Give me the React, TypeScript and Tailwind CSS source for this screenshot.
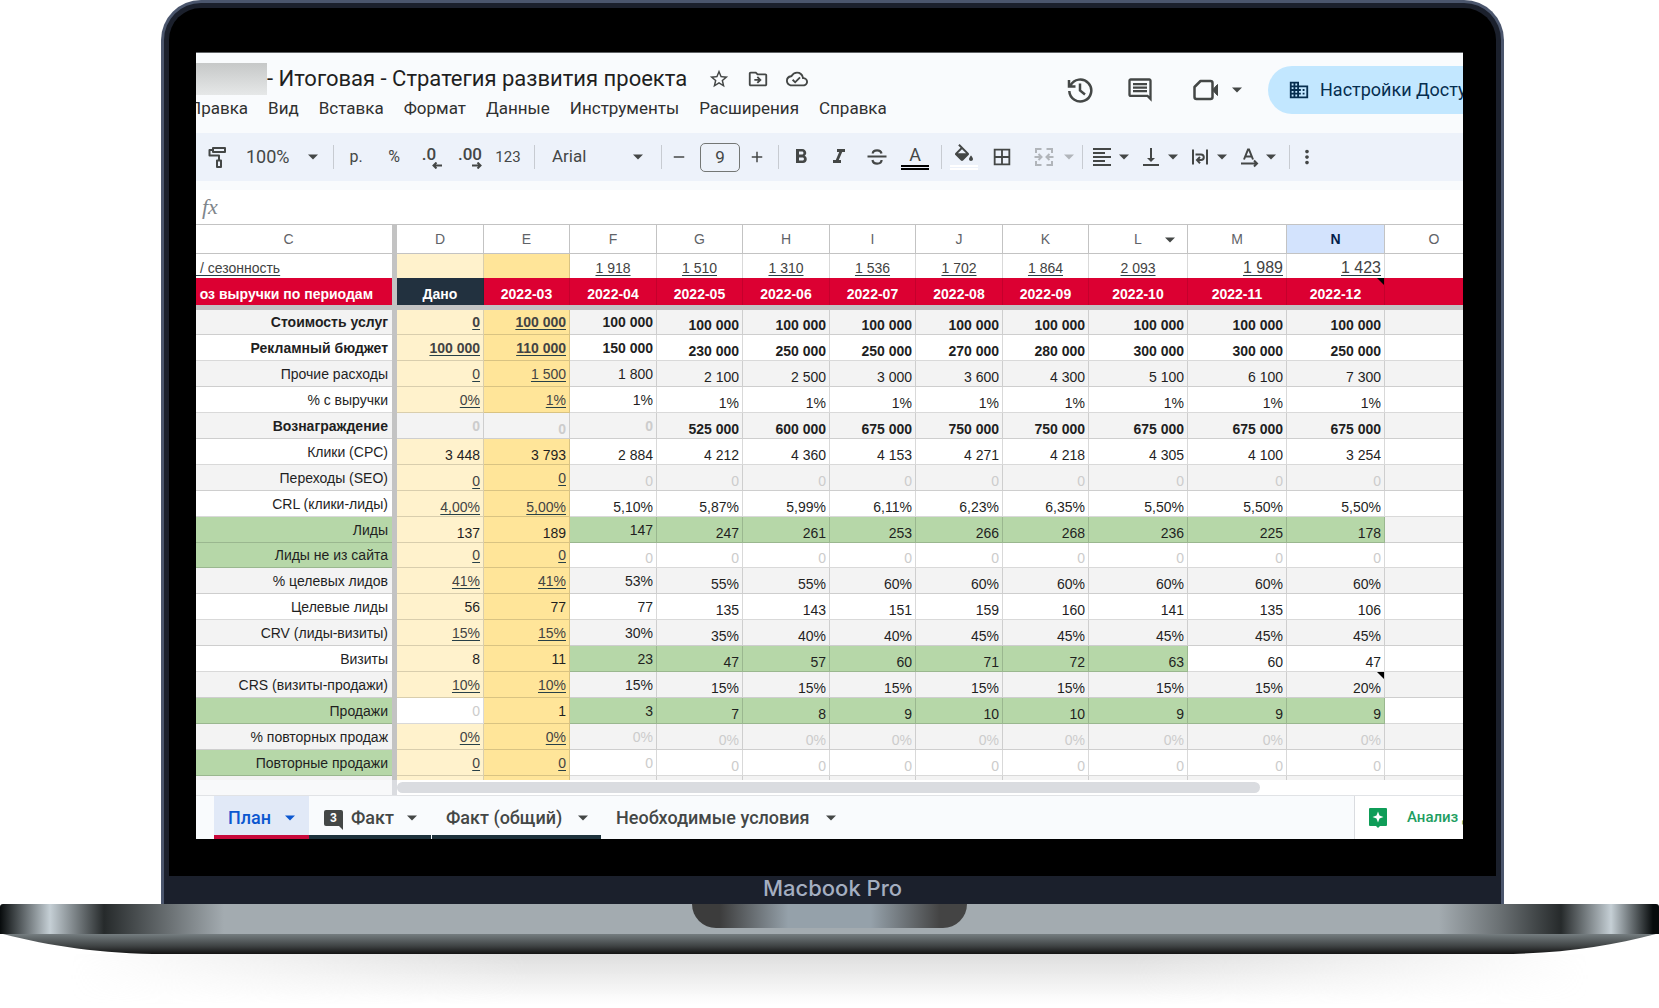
import type { ReactNode } from "react";
import clsx from "clsx";
import {
  MdAdd,
  MdBorderAll,
  MdDomain,
  MdFormatAlignLeft,
  MdFormatBold,
  MdFormatItalic,
  MdMoreVert,
  MdOutlineCloudDone,
  MdOutlineDriveFileMove,
  MdOutlineInsertComment,
  MdRemove,
  MdStarBorder,
  MdVerticalAlignBottom,
} from "react-icons/md";

const menu = ["Правка", "Вид", "Вставка", "Формат", "Данные", "Инструменты", "Расширения", "Справка"];

const columns = [
  { name: "D", width: "w-[87px]" },
  { name: "E", width: "w-[86px]" },
  { name: "F", width: "w-[87px]" },
  { name: "G", width: "w-[86px]" },
  { name: "H", width: "w-[87px]" },
  { name: "I", width: "w-[86px]" },
  { name: "J", width: "w-[87px]" },
  { name: "K", width: "w-[86px]" },
  { name: "L", width: "w-[99px]" },
  { name: "M", width: "w-[99px]" },
  { name: "N", width: "w-[98px]" },
  { name: "O", width: "w-[99px]" },
];

const season = ["", "", "1 918", "1 510", "1 310", "1 536", "1 702", "1 864", "2 093", "1 989", "1 423", ""];

const periods = [
  "Дано",
  "2022-03",
  "2022-04",
  "2022-05",
  "2022-06",
  "2022-07",
  "2022-08",
  "2022-09",
  "2022-10",
  "2022-11",
  "2022-12",
  "",
];

type Row = {
  label: string;
  values: string[];
  bold?: boolean;
  links?: boolean;
  greenLabel?: boolean;
  // last column of the green band that starts at F
  greenTo?: string;
  // columns among D, E and F whose text sits on the bottom edge
  low?: string;
  // columns among D and E without the yellow fill
  plain?: string;
  note?: string;
};

const zeros = (v: string, n: number) => new Array(n).fill(v);

const rows: Row[] = [
  { label: "Стоимость услуг", bold: true, links: true, values: ["0", ...zeros("100 000", 10)] },
  {
    label: "Рекламный бюджет",
    bold: true,
    links: true,
    values: ["100 000", "110 000", "150 000", "230 000", "250 000", "250 000", "270 000", "280 000", "300 000", "300 000", "250 000"],
  },
  {
    label: "Прочие расходы",
    links: true,
    values: ["0", "1 500", "1 800", "2 100", "2 500", "3 000", "3 600", "4 300", "5 100", "6 100", "7 300"],
  },
  { label: "% с выручки", links: true, values: ["0%", ...zeros("1%", 10)] },
  {
    label: "Вознаграждение",
    bold: true,
    low: "E",
    plain: "DE",
    values: ["0", "0", "0", "525 000", "600 000", "675 000", "750 000", "750 000", "675 000", "675 000", "675 000"],
  },
  {
    label: "Клики (CPC)",
    low: "DEF",
    values: ["3 448", "3 793", "2 884", "4 212", "4 360", "4 153", "4 271", "4 218", "4 305", "4 100", "3 254"],
  },
  { label: "Переходы (SEO)", links: true, low: "DF", values: zeros("0", 11) },
  {
    label: "CRL (клики-лиды)",
    links: true,
    low: "DEF",
    values: ["4,00%", "5,00%", "5,10%", "5,87%", "5,99%", "6,11%", "6,23%", "6,35%", "5,50%", "5,50%", "5,50%"],
  },
  {
    label: "Лиды",
    greenLabel: true,
    greenTo: "N",
    low: "DE",
    values: ["137", "189", "147", "247", "261", "253", "266", "268", "236", "225", "178"],
  },
  { label: "Лиды не из сайта", greenLabel: true, links: true, low: "F", values: zeros("0", 11) },
  {
    label: "% целевых лидов",
    links: true,
    values: ["41%", "41%", "53%", "55%", "55%", "60%", "60%", "60%", "60%", "60%", "60%"],
  },
  { label: "Целевые лиды", values: ["56", "77", "77", "135", "143", "151", "159", "160", "141", "135", "106"] },
  {
    label: "CRV (лиды-визиты)",
    links: true,
    values: ["15%", "15%", "30%", "35%", "40%", "40%", "45%", "45%", "45%", "45%", "45%"],
  },
  { label: "Визиты", greenTo: "L", values: ["8", "11", "23", "47", "57", "60", "71", "72", "63", "60", "47"] },
  { label: "CRS (визиты-продажи)", links: true, note: "N", values: ["10%", "10%", ...zeros("15%", 8), "20%"] },
  {
    label: "Продажи",
    greenLabel: true,
    greenTo: "N",
    plain: "D",
    values: ["0", "1", "3", "7", "8", "9", "10", "10", "9", "9", "9"],
  },
  { label: "% повторных продаж", links: true, values: zeros("0%", 11) },
  { label: "Повторные продажи", greenLabel: true, links: true, values: zeros("0", 11) },
];

const Caret = ({ className }: { className?: string }) => (
  <svg viewBox="0 0 10 6" className={clsx("w-[10px] h-[6px] shrink-0", className)} fill="currentColor">
    <path d="M0 0.5h10L5 5.5z" />
  </svg>
);

const Divider = () => <span className="w-px h-6 ml-[7px] mr-[3px] shrink-0 bg-[#c7cbd1]" />;

const Tool = ({ label, wide, children }: { label: string; wide?: string; children: ReactNode }) => (
  <button aria-label={label} className={clsx("h-8 shrink-0 flex items-center justify-center", wide ?? "w-[38px]")}>
    {children}
  </button>
);

const DropTool = ({ label, children }: { label: string; children: ReactNode }) => (
  <button aria-label={label} className="w-[49px] h-8 pl-1 shrink-0 flex items-center gap-[5px]">
    {children}
    <Caret />
  </button>
);

const PaintIcon = () => (
  <svg viewBox="0 0 20 24" className="w-5 h-6" fill="none" stroke="currentColor" strokeWidth="2">
    <path d="M6 3h12v4H6zM6 5H2.500v5.500H12V15M10 15.500h4V22h-4z" strokeLinejoin="round" />
  </svg>
);

const ArrowUnder = ({ flip }: { flip?: boolean }) => (
  <svg viewBox="0 0 10 7" className={clsx("w-[10px] h-[7px]", flip && "rotate-180")} fill="none" stroke="currentColor" strokeWidth="2">
    <path d="M10 3.500H1.500M4.500 0.500l-3 3 3 3" />
  </svg>
);

const StrikeIcon = () => (
  <svg viewBox="0 0 20 20" className="size-5" fill="none" stroke="currentColor" strokeWidth="2.200">
    <path d="M0.500 9.500h19M14.500 6.500c-.4-2-2-3.200-4.400-3.200-2.600 0-4.200 1.300-4.400 3.200M5.500 13c.3 2.200 2 3.600 4.600 3.600 2.700 0 4.400-1.300 4.500-3.600" />
  </svg>
);

const FillIcon = () => (
  <svg viewBox="0 0 24 18" className="w-6 h-[18px]" fill="currentColor">
    <path d="M16.560 8.940L7.620 0 6.210 1.410l2.380 2.380-5.150 5.150c-.59.59-.59 1.540 0 2.120l5.500 5.500c.29.29.68.44 1.060.44s.77-.15 1.060-.44l5.500-5.500c.59-.58.59-1.530 0-2.120zM5.900 9.300L10 5.210 14.100 9.300H5.900zM19 11.500s-2 2.170-2 3.500c0 1.100.9 2 2 2s2-.9 2-2c0-1.330-2-3.500-2-3.500z" />
  </svg>
);

const MergeIcon = () => (
  <svg viewBox="0 0 24 24" className="size-6" fill="none" stroke="currentColor" strokeWidth="2">
    <path d="M9.500 4H4v4M14.500 4H20v4M9.500 20H4v-4M14.500 20H20v-4M2.500 12H9M6.500 9l3 3-3 3M21.500 12H15M17.500 9l-3 3 3 3" />
  </svg>
);

const WrapIcon = () => (
  <svg viewBox="0 0 24 24" className="size-6" fill="none" stroke="currentColor" strokeWidth="2">
    <path d="M5 4.500v15M19 4.500v15M7.500 9.500h5.500a2.800 2.800 0 0 1 0 5.600h-3M12 12l-3 3.100 3 3.100" />
  </svg>
);

const RotateIcon = () => (
  <svg viewBox="0 0 24 24" className="size-6" fill="none" stroke="currentColor" strokeWidth="2">
    <path d="M7 14.500L11 4.500h1l4 10M8.500 11.500h6M4 18.500h15M17 15.500l3 3-3 3" />
  </svg>
);

const HistoryIcon = () => (
  <svg viewBox="0 0 28 28" className="size-7" fill="none" stroke="currentColor" strokeWidth="2.500">
    <path d="M4.500 9.500A11 11 0 1 1 3.300 15M3 4v6.500h6.500M14 7.500V14.500l5 4" />
  </svg>
);

const MeetIcon = () => (
  <svg viewBox="0 0 28 24" className="w-7 h-6" fill="none" stroke="currentColor" strokeWidth="2.500">
    <path d="M8.500 3h10a2 2 0 0 1 2 2v14a2 2 0 0 1-2 2H4.500a2 2 0 0 1-2-2V9z" strokeLinejoin="round" />
    <path d="M20.500 12l5-5.500v11z" fill="currentColor" stroke="currentColor" strokeWidth="1" />
  </svg>
);

const Header = () => (
  <header className="h-20 flex items-center bg-[#f9fbfd] text-[#444746]">
    <div className="flex-1 self-start pt-[9px]">
      <div className="flex items-center h-[34px]">
        <span className="w-[71px] h-8 shrink-0 bg-gradient-to-b from-[#c6c8c8] to-[#e6e8e8]" />
        <h1 className="text-[22px] leading-8 text-[#1f1f1f] whitespace-nowrap">- Итоговая - Стратегия развития проекта</h1>
        <div className="ml-[21px] flex gap-[17px]">
          <button aria-label="Star">
            <MdStarBorder className="size-[22px]" />
          </button>
          <button aria-label="Move">
            <MdOutlineDriveFileMove className="size-[22px]" />
          </button>
          <button aria-label="Saved">
            <MdOutlineCloudDone className="size-[22px]" />
          </button>
        </div>
      </div>
      <nav className="-ml-[7px] flex gap-5 text-[17px] leading-6 text-[#303030]">
        {menu.map((item) => (
          <button key={item}>{item}</button>
        ))}
      </nav>
    </div>
    <div className="flex items-center shrink-0 pb-[6px]">
      <button aria-label="History" className="mr-8">
        <HistoryIcon />
      </button>
      <button aria-label="Comments" className="mr-[38px]">
        <MdOutlineInsertComment className="size-7" />
      </button>
      <button aria-label="Call" className="flex items-center gap-3 mr-[26px]">
        <MeetIcon />
        <Caret />
      </button>
      <button className="w-[195px] h-12 pl-5 flex items-center gap-[10px] rounded-l-full bg-[#c2e7ff] text-[#062e4f] text-lg whitespace-nowrap">
        <MdDomain className="size-[22px] shrink-0" />
        Настройки Доступа
      </button>
    </div>
  </header>
);

const Toolbar = () => (
  <div className="h-12 flex items-center bg-[#edf2fa] text-[#444746]">
    <Tool label="Paint format" wide="w-[42px]">
      <PaintIcon />
    </Tool>
    <button className="w-[88px] h-8 pl-2 pr-2 shrink-0 flex items-center justify-between text-lg">
      100%
      <Caret />
    </button>
    <Divider />
    <Tool label="Currency">р.</Tool>
    <Tool label="Percent">%</Tool>
    <Tool label="Fewer decimals">
      <span className="flex flex-col items-end font-medium text-[17px] leading-4">
        <span className="pr-[6px]">.0</span>
        <ArrowUnder />
      </span>
    </Tool>
    <Tool label="More decimals">
      <span className="flex flex-col items-end font-medium text-[17px] leading-4">
        .00
        <ArrowUnder flip />
      </span>
    </Tool>
    <Tool label="Number format">
      <span className="text-[15px]">123</span>
    </Tool>
    <Divider />
    <button className="w-[116px] h-8 pl-[14px] pr-[11px] shrink-0 flex items-center justify-between text-[17px]">
      Arial
      <Caret />
    </button>
    <Divider />
    <Tool label="Smaller" wide="w-7">
      <MdRemove className="size-[18px]" />
    </Tool>
    <input
      aria-label="Font size"
      defaultValue="9"
      className="w-10 h-[29px] ml-[7px] mr-[3px] shrink-0 rounded-[5px] border border-[#747775] text-center text-[17px]"
    />
    <Tool label="Larger" wide="w-7">
      <MdAdd className="size-[18px]" />
    </Tool>
    <Divider />
    <Tool label="Bold">
      <MdFormatBold className="size-6" />
    </Tool>
    <Tool label="Italic">
      <MdFormatItalic className="size-6" />
    </Tool>
    <Tool label="Strikethrough">
      <StrikeIcon />
    </Tool>
    <Tool label="Text color">
      <span className="w-7 flex flex-col items-center border-b-5 border-double border-black text-lg leading-5">A</span>
    </Tool>
    <Divider />
    <Tool label="Fill color">
      <span className="w-7 pb-[3px] flex justify-center border-b-5 border-double border-white">
        <FillIcon />
      </span>
    </Tool>
    <Tool label="Borders">
      <MdBorderAll className="size-[22px]" />
    </Tool>
    <button aria-label="Merge" className="w-[54px] h-8 pl-[11px] shrink-0 flex items-center gap-2 text-[#b1b5ba]">
      <MergeIcon />
      <Caret />
    </button>
    <Divider />
    <DropTool label="Horizontal align">
      <MdFormatAlignLeft className="size-6" />
    </DropTool>
    <DropTool label="Vertical align">
      <MdVerticalAlignBottom className="size-6" />
    </DropTool>
    <DropTool label="Wrap">
      <WrapIcon />
    </DropTool>
    <DropTool label="Rotate">
      <RotateIcon />
    </DropTool>
    <Divider />
    <Tool label="More" wide="w-7">
      <MdMoreVert className="size-[22px]" />
    </Tool>
  </div>
);

const Note = () => (
  <span className="absolute top-0 right-0 size-0 border-t-[7px] border-l-[7px] border-t-black border-l-transparent" />
);

const SheetRow = ({ row, index }: { row: Row; index: number }) => (
  <tr className={clsx(index % 9 === 0 ? "h-[25px]" : "h-[26px]", index % 2 === 0 ? "bg-[#f3f3f3]" : "bg-white")}>
    <th
      scope="row"
      className={clsx(
        "pr-1 text-right border-b border-black/15",
        row.bold ? "font-bold" : "font-normal",
        row.greenLabel && "bg-[#b6d7a8]",
      )}
    >
      {row.label}
    </th>
    <td className="bg-[#c3c3c3]" />
    {columns.map(({ name }, idx) => {
      const value = row.values[idx] ?? "";
      const yellow = idx < 2 && !row.plain?.includes(name);
      const green = idx > 1 && row.greenTo !== undefined && name <= row.greenTo;
      const link = idx < 2 && row.links;
      const low = idx > 2 || row.low?.includes(name);
      return (
        <td
          key={name}
          className={clsx(
            "relative pr-[3px] text-right border-r border-b border-black/15",
            yellow && name === "D" && "bg-[#fff2cc]",
            yellow && name === "E" && "bg-[#ffe599]",
            green && "bg-[#b6d7a8]",
            low ? "align-bottom pb-px" : "align-middle",
            row.bold && "font-bold",
            link && "underline decoration-[#274048] underline-offset-2 text-[#434343]",
            !link && /^0%?$/.test(value) && "text-[#cccccc]",
          )}
        >
          {value}
          {row.note === name && <Note />}
        </td>
      );
    })}
  </tr>
);

const Sheet = () => (
  <div className="h-[556px] overflow-hidden bg-white">
    <table className="w-[1288px] table-fixed border-separate border-spacing-0 text-sm leading-4 text-[#1f1f1f]">
      <colgroup>
        <col className="w-[196px]" />
        <col className="w-[5px]" />
        {columns.map(({ name, width }) => (
          <col key={name} className={width} />
        ))}
      </colgroup>
      <thead>
        <tr className="h-[30px] text-[#5f6368]">
          <th className="pr-[11px] font-normal border-y border-[#c3c3c3]">C</th>
          <th className="bg-[#c3c3c3]" />
          {columns.map(({ name }) => (
            <th
              key={name}
              className={clsx(
                "relative border-y border-r border-[#c3c3c3]",
                name === "N" ? "bg-[#d3e3fd] font-bold text-[#041e49]" : "font-normal",
              )}
            >
              {name}
              {name === "L" && <Caret className="absolute right-3 top-3 text-[#444746]" />}
            </th>
          ))}
        </tr>
        <tr className="h-6">
          <td className="align-bottom pb-[2px]">
            <span className="underline underline-offset-2 decoration-[#274048] text-[#434343]">{"\u00a0/ сезонность"}</span>
          </td>
          <td className="bg-[#c3c3c3]" />
          {season.map((value, idx) => (
            <td
              key={idx}
              className={clsx(
                "border-r border-black/15 align-bottom pb-[2px] underline underline-offset-2 decoration-[#274048] text-[#434343]",
                idx === 0 && "bg-[#fff2cc]",
                idx === 1 && "bg-[#ffe599]",
                idx > 8 ? "text-right pr-[3px] text-base leading-4" : "text-center",
              )}
            >
              {value}
            </td>
          ))}
        </tr>
        <tr className="h-[27px] bg-[#dc0032] text-white">
          <th className="pt-1 pr-[19px] text-right whitespace-nowrap">оз выручки по периодам</th>
          <td className="bg-[#c3c3c3]" />
          {periods.map((period, idx) => (
            <th key={idx} className={clsx("relative pt-1 border-r border-black/10", idx === 0 && "bg-[#22313f]")}>
              {period}
              {period === "2022-12" && <Note />}
            </th>
          ))}
        </tr>
        <tr className="h-[5px] bg-[#c3c3c3]">
          <td colSpan={14} />
        </tr>
      </thead>
      <tbody>
        {rows.map((row, idx) => (
          <SheetRow key={row.label} row={row} index={idx} />
        ))}
        <SheetRow row={{ label: "", values: [] }} index={18} />
      </tbody>
    </table>
  </div>
);

const Tabs = () => (
  <div className="h-11 flex border-t border-[#e1e3e6] bg-[#f9fbfd] text-lg font-medium text-[#444746] whitespace-nowrap">
    <div className="flex-1 flex pl-[18px]">
      <button className="w-[95px] pt-1 pl-[14px] pr-[14px] flex items-center justify-between bg-[#e1e9f7] border-b-4 border-[#c8083a] text-[#0b57d0]">
        План
        <Caret />
      </button>
      <button className="w-[122px] pt-1 pl-[15px] pr-[14px] flex items-center justify-between border-b-4 border-[#1e323c]">
        <span className="flex items-center gap-2">
          <span className="relative w-[19px] h-4 rounded-[2px] rounded-br-none bg-[#444746] text-white text-xs font-bold leading-4 text-center">
            3
            <span className="absolute top-full right-0 border-t-4 border-l-4 border-t-[#444746] border-l-transparent" />
          </span>
          Факт
        </span>
        <Caret />
      </button>
      <button className="w-[169px] pt-1 ml-px pl-[14px] pr-[13px] flex items-center justify-between border-b-4 border-[#1e323c]">
        Факт (общий)
        <Caret />
      </button>
      <button className="w-[249px] pt-1 pl-[15px] pr-[14px] flex items-center justify-between border-b-4 border-transparent">
        Необходимые условия
        <Caret />
      </button>
    </div>
    <button className="w-[109px] pl-[14px] flex items-center gap-5 border-l border-[#dadce0] bg-white text-[#1e9e62] text-[15px]">
      <svg viewBox="0 0 18 20" className="w-[18px] h-5 shrink-0">
        <path d="M1 0h16a1 1 0 0 1 1 1v16a1 1 0 0 1-1 1h-6l-2 2-2-2H1a1 1 0 0 1-1-1V1a1 1 0 0 1 1-1z" fill="#0f9d58" />
        <path d="M9 3.500l1.500 4 4 1.500-4 1.500-1.500 4-1.500-4-4-1.500 4-1.500z" fill="#fff" />
      </svg>
      Анализ данных
    </button>
  </div>
);

const Screen = () => (
  <div className="overflow-hidden border-t border-[#5f6265] bg-white">
    <Header />
    <Toolbar />
    <div className="h-[43px] pl-[6px] flex items-center border-t-9 border-[#f9fbfd]">
      <span className="font-['Liberation_Serif'] italic text-[22px] leading-6 text-[#80868b]">fx</span>
    </div>
    <Sheet />
    <div className="h-[15px] flex">
      <div className="w-[196px] bg-[#f8f9fa]" />
      <div className="w-[5px] bg-[#dadce0]" />
      <div className="w-[863px] h-[11px] mt-[2px] rounded-full bg-[#dadce0]" />
    </div>
    <Tabs />
  </div>
);

const Base = () => (
  <div>
    <div className="h-[30px] rounded-t-[3px] flex justify-center bg-[linear-gradient(to_right,#070b0c_0,#c5cfd5_50px,#262a2b_104px,#6b7174_170px,#a3abb0_224px,#a3abb0_calc(100%-220px),#6b7174_calc(100%-160px),#262a2b_calc(100%-98px),#c5cfd5_calc(100%-48px),#070b0c_calc(100%-6px))]">
      <div className="w-[275px] h-6 rounded-b-3xl bg-[linear-gradient(to_right,#3c3c3c_10%,#95a1aa_35%,#95a1aa_65%,#444444_90%)]" />
    </div>
    <svg viewBox="0 0 1659 20" preserveAspectRatio="none" className="block w-full h-5">
      <defs>
        <linearGradient id="under" x1="0" y1="0" x2="0" y2="1">
          <stop offset="0" stopColor="#757d80" />
          <stop offset="0.600" stopColor="#3f4344" />
          <stop offset="1" stopColor="#121212" />
        </linearGradient>
      </defs>
      <path d="M3 0C50 12 100 20 165 20H1500C1560 20 1610 12 1656 0z" fill="url(#under)" />
    </svg>
    <div className="h-[50px] mx-[70px] bg-gradient-to-b from-[#dedede] to-transparent [mask-image:linear-gradient(to_right,transparent,black_30%,black_70%,transparent)]" />
  </div>
);

export default function App() {
  return (
    <main className="min-h-screen overflow-hidden bg-white font-['Roboto',sans-serif]">
      <div className="ml-[161px] mr-[155px] rounded-t-[40px] border-3 border-b-0 border-[#4b566d] bg-[#1b202c] px-[5px] pt-[5px]">
        <div className="rounded-t-[32px] bg-black pl-[27px] pr-[33px] pt-11 pb-[37px] [&_table]:font-['Liberation_Sans',sans-serif]">
          <Screen />
        </div>
        <p className="h-7 text-center font-['Inter',sans-serif] text-[22px] leading-6 font-medium text-[#a4aec0]">Macbook Pro</p>
      </div>
      <Base />
    </main>
  );
}
